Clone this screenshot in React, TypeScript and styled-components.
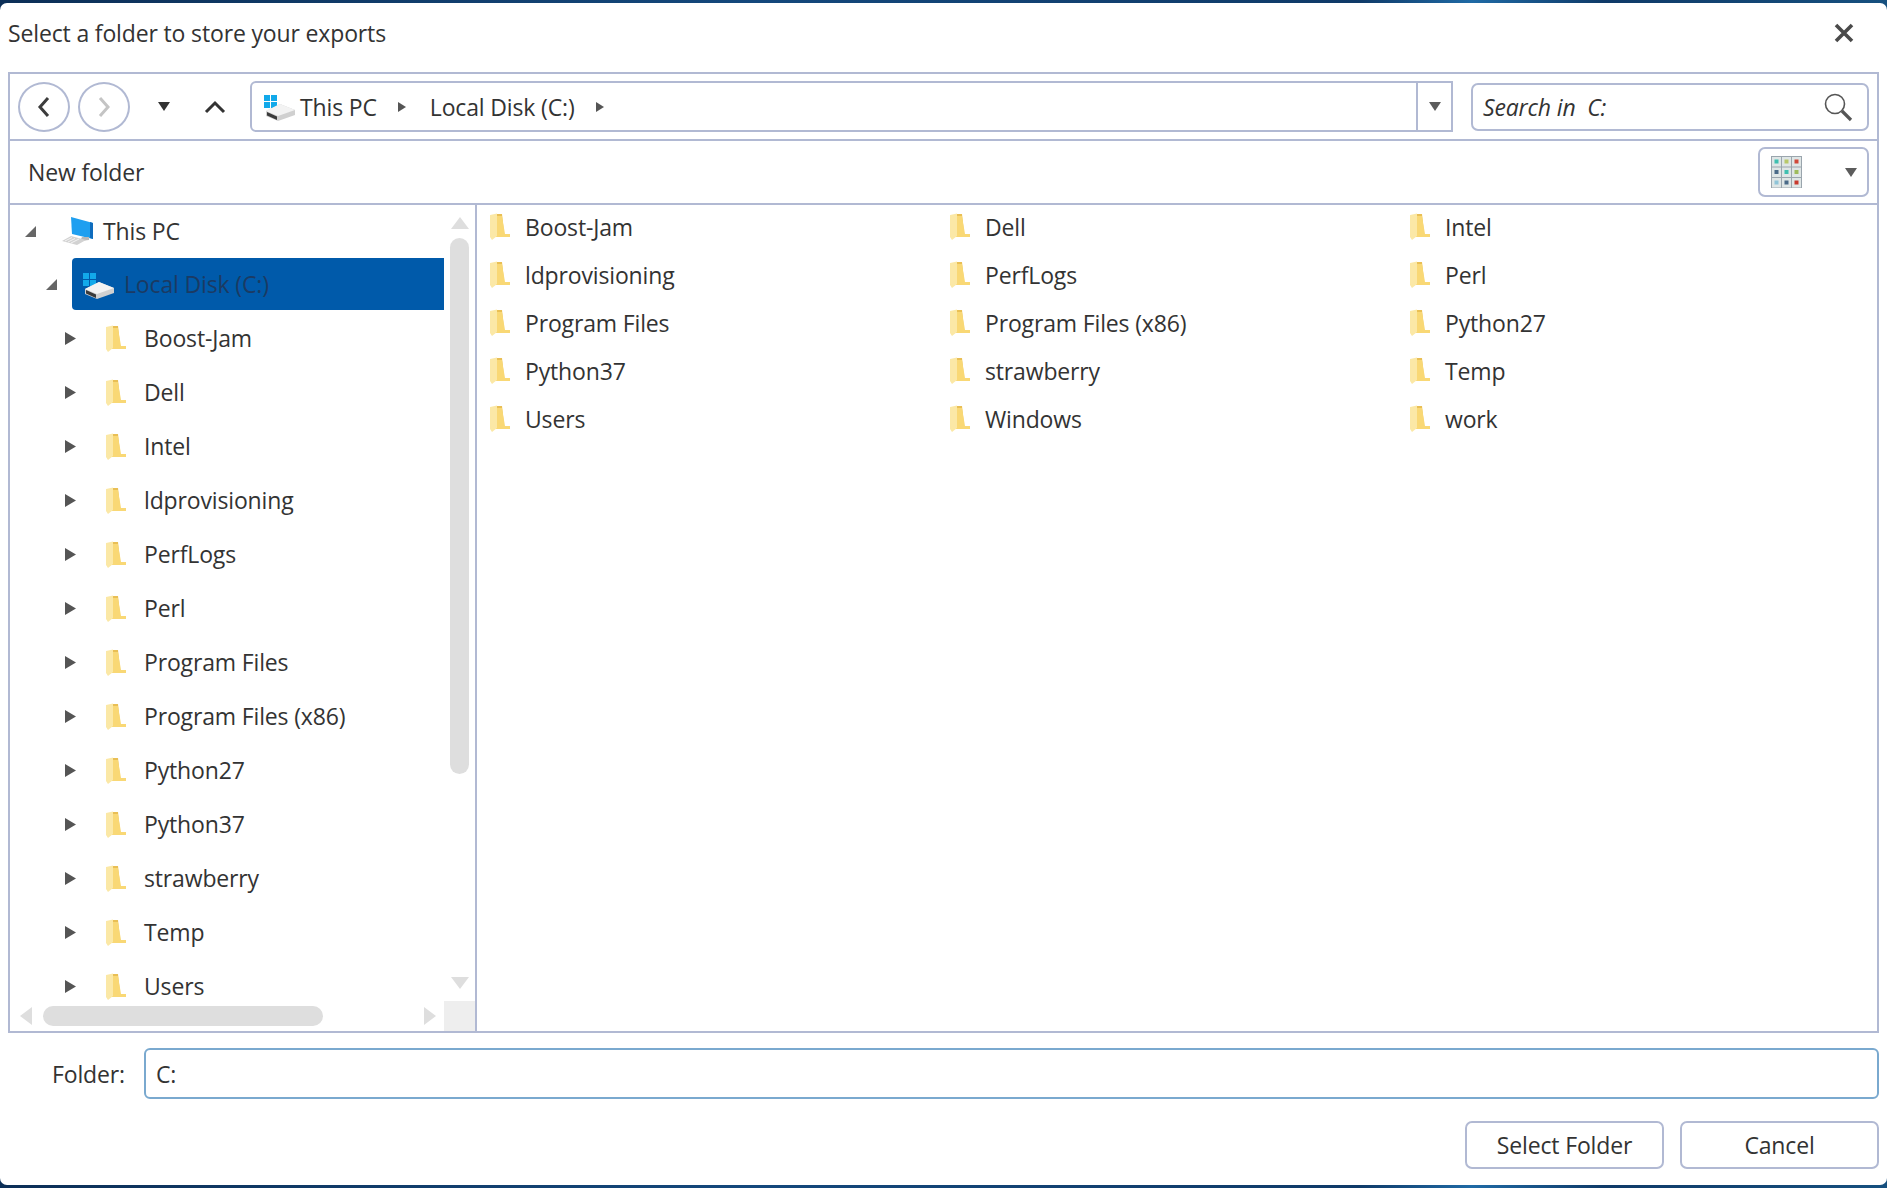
import React from "react";
import styled, { createGlobalStyle } from "styled-components";

const Global = createGlobalStyle`
  html, body { margin: 0; padding: 0; height: 100%; background: #0e3560; overflow: hidden; }
  #root { height: 1188px; }
`;

const border = "#b1b9d3";
const fontStack = `"Open Sans", "Noto Sans", sans-serif`;

const Page = styled.div`
  width: 1887px;
  height: 1188px;
  box-sizing: border-box;
  padding: 3px 0;
  background: linear-gradient(90deg, #0c2f57 0%, #14487c 40%, #0f3a68 72%, #1f6aa5 78%, #0f3a68 85%, #16507f 100%);
  font-family: ${fontStack};
  font-size: 23px;
  color: #333;
  letter-spacing: -0.15px;
`;

const Dialog = styled.div`
  height: 100%;
  box-sizing: border-box;
  background: #fff;
  border-radius: 7px;
  padding: 0 8px;
  display: flex;
  flex-direction: column;
`;

const TitleBar = styled.div`
  height: 69px;
  display: flex;
  align-items: center;
  justify-content: space-between;
  flex: none;
  padding: 0 25px 10px 0;
  box-sizing: border-box;
`;

const Frame = styled.div`
  height: 961px;
  flex: none;
  box-sizing: border-box;
  border: 2px solid ${border};
  display: flex;
  flex-direction: column;
`;

const NavBar = styled.div`
  height: 67px;
  flex: none;
  box-sizing: border-box;
  border-bottom: 2px solid ${border};
  display: flex;
  align-items: center;
  padding: 0 8px;
`;

const RoundButton = styled.div<{ $muted?: boolean }>`
  width: 52px;
  height: 50px;
  box-sizing: border-box;
  border: 2px solid ${border};
  border-radius: 50%;
  display: flex;
  align-items: center;
  justify-content: center;
  margin-right: 8px;
  color: ${(p) => (p.$muted ? "#c4c4c4" : "#3c3c3c")};
  flex: none;
`;

const NavSlot = styled.div<{ $w: number }>`
  width: ${(p) => p.$w}px;
  flex: none;
  display: flex;
  align-items: center;
  justify-content: center;
`;

const AddressBox = styled.div`
  width: 1203px;
  height: 51px;
  flex: none;
  box-sizing: border-box;
  border: 2px solid ${border};
  border-radius: 6px 0 0 6px;
  display: flex;
  align-items: center;
  margin-right: 18px;
`;

const Crumbs = styled.div`
  flex: 1;
  height: 100%;
  display: flex;
  align-items: center;
  padding-left: 12px;
  border-right: 2px solid ${border};
`;

const CrumbText = styled.span`
  margin-left: 4px;
`;

const CrumbArrow = styled.span`
  width: 0;
  height: 0;
  margin: 0 24px 0 21px;
  border-left: 8px solid #555;
  border-top: 5.5px solid transparent;
  border-bottom: 5.5px solid transparent;
`;

const AddressDrop = styled.div`
  width: 33px;
  flex: none;
  display: flex;
  align-items: center;
  justify-content: center;
`;

const DownArrow = styled.span<{ $dark?: boolean }>`
  width: 0;
  height: 0;
  border-top: 9px solid ${(p) => (p.$dark ? "#333" : "#5c5c5c")};
  border-left: 6px solid transparent;
  border-right: 6px solid transparent;
`;

const SearchBox = styled.div`
  width: 398px;
  height: 48px;
  flex: none;
  box-sizing: border-box;
  border: 2px solid ${border};
  border-radius: 7px;
  display: flex;
  align-items: center;
  justify-content: space-between;
  padding: 0 14px 0 10px;
  font-style: italic;
`;

const ActionBar = styled.div`
  height: 64px;
  flex: none;
  box-sizing: border-box;
  border-bottom: 2px solid ${border};
  display: flex;
  align-items: center;
  justify-content: space-between;
  padding: 0 8px 0 18px;
`;

const ViewButton = styled.div`
  width: 111px;
  height: 50px;
  box-sizing: border-box;
  border: 2px solid ${border};
  border-radius: 7px;
  display: flex;
  align-items: center;
  justify-content: space-between;
  padding: 0 10px 0 11px;
`;

const Panes = styled.div`
  flex: 1;
  min-height: 0;
  display: flex;
`;

const TreePane = styled.div`
  width: 467px;
  flex: none;
  box-sizing: border-box;
  border-right: 2px solid ${border};
  display: grid;
  grid-template-columns: 1fr 31px;
  grid-template-rows: 1fr 30px;
  min-height: 0;
`;

const TreeList = styled.div`
  overflow: hidden;
  line-height: 24px;
`;

const TreeRow = styled.div<{ $indent: number; $head?: boolean }>`
  height: ${(p) => (p.$head ? "52px" : "54px")};
  display: flex;
  align-items: center;
  padding-left: ${(p) => p.$indent}px;
`;

const TreeLabelBox = styled.div<{ $selected?: boolean }>`
  height: ${(p) => (p.$selected ? "52px" : "auto")};
  flex: 1;
  display: flex;
  align-items: center;
  background: ${(p) => (p.$selected ? "#005aaa" : "transparent")};
  color: ${(p) => (p.$selected ? "#1b3a63" : "inherit")};
  border-radius: 4px 0 0 4px;
  margin-left: ${(p) => (p.$selected ? "11px" : "0")};
  padding-left: ${(p) => (p.$selected ? "11px" : "0")};
`;

const TreeText = styled.span<{ $gap: number }>`
  display: inline-flex;
  margin-left: ${(p) => p.$gap}px;
`;

const Expander = styled.span<{ $open?: boolean }>`
  width: ${(p) => (p.$open ? "16px" : "15px")};
  flex: none;
  display: flex;
`;

const VScroll = styled.div`
  display: flex;
  flex-direction: column;
  align-items: center;
  overflow: hidden;
`;

const UpMark = styled.span`
  width: 0;
  height: 0;
  flex: none;
  margin-top: 12px;
  border-bottom: 12px solid #dedede;
  border-left: 9px solid transparent;
  border-right: 9px solid transparent;
`;

const VThumb = styled.div`
  width: 19px;
  height: 536px;
  flex: none;
  margin-top: 9px;
  background: #dedede;
  border-radius: 10px;
`;

const DownMark = styled.span`
  width: 0;
  height: 0;
  flex: none;
  margin-top: 203px;
  border-top: 12px solid #dedede;
  border-left: 9px solid transparent;
  border-right: 9px solid transparent;
`;

const HScroll = styled.div`
  display: flex;
  align-items: center;
  padding: 0 0 1px 10px;
`;

const LeftMark = styled.span`
  width: 0;
  height: 0;
  flex: none;
  border-right: 12px solid #dedede;
  border-top: 9px solid transparent;
  border-bottom: 9px solid transparent;
`;

const RightMark = styled.span`
  width: 0;
  height: 0;
  flex: none;
  margin-left: 101px;
  border-left: 12px solid #dedede;
  border-top: 9px solid transparent;
  border-bottom: 9px solid transparent;
`;

const HThumb = styled.div`
  width: 280px;
  height: 20px;
  flex: none;
  margin-left: 11px;
  background: #dedede;
  border-radius: 10px;
`;

const Corner = styled.div`
  background: #eeeeee;
`;

const FileGrid = styled.div`
  flex: 1;
  display: grid;
  grid-template-columns: repeat(3, 460px);
  grid-auto-rows: 48px;
  align-content: start;
  padding-left: 13px;
`;

const FileItem = styled.div`
  display: flex;
  align-items: center;
  gap: 15px;
  height: 48px;
  box-sizing: border-box;
  padding-bottom: 5px;
`;

const FolderRow = styled.div`
  height: 51px;
  flex: none;
  margin-top: 15px;
  display: flex;
  align-items: center;
`;

const FolderLabel = styled.label`
  width: 136px;
  flex: none;
  box-sizing: border-box;
  padding-left: 44px;
`;

const FolderInput = styled.div`
  flex: 1;
  height: 100%;
  box-sizing: border-box;
  border: 2px solid #7aa9cf;
  border-radius: 6px;
  display: flex;
  align-items: center;
  padding-left: 10px;
`;

const ButtonRow = styled.div`
  display: flex;
  justify-content: flex-end;
  gap: 16px;
  margin-top: 22px;
`;

const DialogButton = styled.div`
  width: 199px;
  height: 48px;
  box-sizing: border-box;
  border: 2px solid ${border};
  border-radius: 7px;
  display: flex;
  align-items: center;
  justify-content: center;
`;

const FolderIcon = () => (
  <svg width="20" height="27" viewBox="0 0 20 27" style={{ flex: "none" }}>
    <path d="M7 1 H12 L14 20 V23 H7 Z" fill="#e9bf55" />
    <path d="M12 3 L15 21 H20 V24 H6 V3 Z" fill="#f9d875" />
    <path d="M0 2 L7 0.5 V23 L2 27 L0 24 Z" fill="#fbe8a6" />
  </svg>
);

const DriveIcon = () => (
  <svg width="32" height="26" viewBox="0 0 32 26" style={{ flex: "none", marginTop: 3 }}>
    <rect x="0" y="0" width="6" height="6" fill="#12a9ea" />
    <rect x="7" y="0" width="6" height="6" fill="#12a9ea" />
    <rect x="0" y="7" width="6" height="6" fill="#12a9ea" />
    <rect x="7" y="7" width="6" height="6" fill="#12a9ea" />
    <path d="M2 16 L16 9 L31 15 V20 L14 26 L2 21 Z" fill="#d0d0d0" />
    <path d="M2 16 L14 21 L31 15 L16 9 Z" fill="#f3f3f3" />
    <path d="M3 17 L13 21.5 V25 L3 20.5 Z" fill="#3a3a3a" />
  </svg>
);

const PcIcon = () => (
  <svg width="31" height="28" viewBox="0 0 31 28" style={{ flex: "none" }}>
    <path d="M9 0 L31 6 V22 L10 17 Z" fill="#1e9ff0" />
    <path d="M28 5 L31 6 V22 L28 21 Z" fill="#0f6cbd" />
    <path d="M20 20 H27 V23 L18 24 Z" fill="#b8b8b8" />
    <path d="M0 24 L9 19 L24 23 L15 28 Z" fill="#d2d2d2" />
    <path d="M3 24 L10 20.5 M6 25 L13 21.5 M9 26 L17 22" stroke="#f4f4f4" strokeWidth="1" />
  </svg>
);

const ViewIcon = () => {
  const cols = ["#3fbfb0", "#b8c86a", "#d0483a", "#4a6a88", "#3fbfb0", "#9dbb5c", "#8fc4d8", "#4a6a88", "#c8392e"];
  return (
    <svg width="31" height="32" viewBox="0 0 31 32">
      <rect width="31" height="32" fill="#9aa5ad" />
      {cols.map((c, i) => {
        const x = 1 + (i % 3) * 10;
        const y = 1 + Math.floor(i / 3) * 10.5;
        return (
          <g key={i}>
            <rect x={x} y={y} width="9" height="9.5" fill="#dfe6e6" />
            <rect x={x + 2.5} y={y + 2.5} width="4" height="4" fill={c} />
          </g>
        );
      })}
    </svg>
  );
};

const Tri = ({ open }: { open?: boolean }) =>
  open ? (
    <svg width="13" height="13" viewBox="0 0 13 13">
      <path d="M12 1 V12 H1 Z" fill="#666" />
    </svg>
  ) : (
    <svg width="13" height="15" viewBox="0 0 13 15">
      <path d="M1 1 L12 7.5 L1 14 Z" fill="#555" />
    </svg>
  );

const treeFolders = ["Boost-Jam", "Dell", "Intel", "ldprovisioning", "PerfLogs", "Perl", "Program Files", "Program Files (x86)", "Python27", "Python37", "strawberry", "Temp", "Users"];
const gridFolders = ["Boost-Jam", "Dell", "Intel", "ldprovisioning", "PerfLogs", "Perl", "Program Files", "Program Files (x86)", "Python27", "Python37", "strawberry", "Temp", "Users", "Windows", "work"];

export default function App() {
  return (
    <Page>
      <Global />
      <Dialog>
        <TitleBar>
          <span>Select a folder to store your exports</span>
          <svg width="20" height="20" viewBox="0 0 20 20">
            <path d="M2 2 L18 18 M18 2 L2 18" stroke="#4a4a4a" strokeWidth="3.6" />
          </svg>
        </TitleBar>
        <Frame>
          <NavBar>
            <RoundButton>
              <svg width="16" height="24" viewBox="0 0 16 24"><path d="M12 3 L4 12 L12 21" fill="none" stroke="currentColor" strokeWidth="3" /></svg>
            </RoundButton>
            <RoundButton $muted>
              <svg width="16" height="24" viewBox="0 0 16 24"><path d="M4 3 L12 12 L4 21" fill="none" stroke="currentColor" strokeWidth="3" /></svg>
            </RoundButton>
            <NavSlot $w={52}><DownArrow $dark /></NavSlot>
            <NavSlot $w={50}>
              <svg width="22" height="14" viewBox="0 0 22 14"><path d="M2 12 L11 3 L20 12" fill="none" stroke="#333" strokeWidth="3" /></svg>
            </NavSlot>
            <NavSlot $w={10} />
            <AddressBox>
              <Crumbs>
                <DriveIcon />
                <CrumbText>This PC</CrumbText>
                <CrumbArrow />
                <span>Local Disk (C:)</span>
                <CrumbArrow />
              </Crumbs>
              <AddressDrop><DownArrow /></AddressDrop>
            </AddressBox>
            <SearchBox>
              <span>Search in&nbsp; C:</span>
              <svg width="30" height="30" viewBox="0 0 30 30">
                <circle cx="12" cy="12" r="9.5" fill="none" stroke="#555" strokeWidth="1.6" />
                <path d="M19 19 L28 28" stroke="#555" strokeWidth="3.2" />
              </svg>
            </SearchBox>
          </NavBar>
          <ActionBar>
            <span>New folder</span>
            <ViewButton>
              <ViewIcon />
              <DownArrow />
            </ViewButton>
          </ActionBar>
          <Panes>
            <TreePane>
              <TreeList>
                <TreeRow $indent={14} $head>
                  <Expander $open><Tri open /></Expander>
                  <TreeText $gap={22}><PcIcon /></TreeText>
                  <TreeText $gap={10}>This PC</TreeText>
                </TreeRow>
                <TreeRow $indent={35}>
                  <Expander $open><Tri open /></Expander>
                  <TreeLabelBox $selected>
                    <DriveIcon />
                    <TreeText $gap={9}>Local Disk (C:)</TreeText>
                  </TreeLabelBox>
                </TreeRow>
                {treeFolders.map((f) => (
                  <TreeRow $indent={54} key={f}>
                    <Expander><Tri /></Expander>
                    <TreeLabelBox>
                      <TreeText $gap={27}><FolderIcon /></TreeText>
                      <TreeText $gap={18}>{f}</TreeText>
                    </TreeLabelBox>
                  </TreeRow>
                ))}
              </TreeList>
              <VScroll>
                <UpMark />
                <VThumb />
                <DownMark />
              </VScroll>
              <HScroll>
                <LeftMark />
                <HThumb />
                <RightMark />
              </HScroll>
              <Corner />
            </TreePane>
            <FileGrid>
              {gridFolders.map((f) => (
                <FileItem key={f}>
                  <FolderIcon />
                  <span>{f}</span>
                </FileItem>
              ))}
            </FileGrid>
          </Panes>
        </Frame>
        <FolderRow>
          <FolderLabel>Folder:</FolderLabel>
          <FolderInput>C:</FolderInput>
        </FolderRow>
        <ButtonRow>
          <DialogButton>Select Folder</DialogButton>
          <DialogButton>Cancel</DialogButton>
        </ButtonRow>
      </Dialog>
    </Page>
  );
}
